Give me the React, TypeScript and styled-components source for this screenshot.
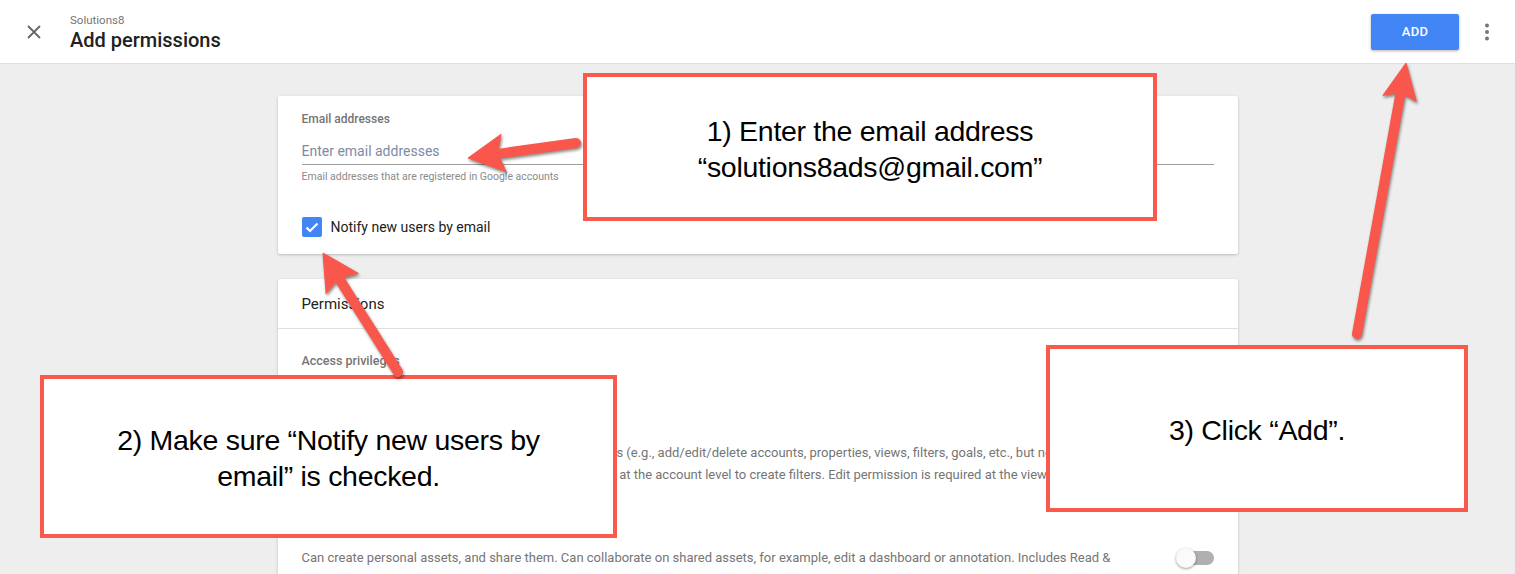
import React from 'react';
import styled, { createGlobalStyle } from 'styled-components';

const GlobalStyle = createGlobalStyle`
  html, body {
    margin: 0;
    padding: 0;
    background: #eeeeee;
    font-family: Roboto, "Noto Sans", Arial, sans-serif;
    overflow: hidden;
  }
  * { box-sizing: border-box; }
`;

const Page = styled.div`
  position: relative;
  width: 1515px;
  height: 574px;
  overflow: hidden;
  background: #eeeeee;
`;

const Header = styled.header`
  height: 64px;
  background: #fff;
  border-bottom: 1px solid #e0e0e0;
  display: flex;
  align-items: center;
  padding: 0 16px 0 22px;
`;

const CloseButton = styled.button`
  width: 24px;
  height: 24px;
  border: none;
  background: none;
  padding: 0;
  display: flex;
  align-items: center;
  justify-content: center;
  color: #616161;
  margin-right: 24px;
`;

const TitleBlock = styled.div`
  display: flex;
  flex-direction: column;
  flex: 1;
  margin-top: 2px;
`;

const Account = styled.div`
  font-size: 11.5px;
  color: #757575;
  line-height: 14px;
`;

const Title = styled.h1`
  margin: 0;
  font-size: 20px;
  font-weight: 500;
  color: #212121;
  line-height: 26px;
`;

const AddButton = styled.button`
  width: 88px;
  height: 36px;
  border: none;
  border-radius: 2px;
  background: #4285f4;
  color: #fff;
  font-family: Roboto, sans-serif;
  font-size: 13px;
  font-weight: 500;
  letter-spacing: 0.3px;
  box-shadow: 0 1px 3px rgba(0, 0, 0, 0.3);
  margin-right: 16px;
`;

const MoreButton = styled.button`
  width: 24px;
  height: 24px;
  border: none;
  background: none;
  padding: 0;
  display: flex;
  align-items: center;
  justify-content: center;
`;

const Main = styled.main`
  display: flex;
  flex-direction: column;
  align-items: center;
  gap: 25px;
  padding-top: 32px;
`;

const Card = styled.section`
  width: 960px;
  background: #fff;
  border-radius: 2px;
  box-shadow: 0 1px 3px rgba(0, 0, 0, 0.22);
`;

const EmailBody = styled.div`
  padding: 16px 24px 17px;
`;

const FieldLabel = styled.div`
  font-size: 12px;
  font-weight: 500;
  color: #757575;
  line-height: 14px;
`;

const InputLine = styled.div`
  margin-top: 16px;
  border-bottom: 1px solid #9e9e9e;
  padding-bottom: 4px;
  font-size: 14px;
  line-height: 18px;
  color: #7d8aa6;
`;

const Helper = styled.div`
  margin-top: 5px;
  font-size: 10.5px;
  color: #8a8a8a;
  line-height: 14px;
`;

const CheckRow = styled.label`
  margin-top: 33px;
  display: flex;
  align-items: center;
  gap: 9px;
  font-size: 14px;
  color: #212121;
`;

const CheckBox = styled.span`
  width: 20px;
  height: 20px;
  border-radius: 2px;
  background: #4285f4;
  display: flex;
  align-items: center;
  justify-content: center;
`;

const CardHeader = styled.div`
  height: 50px;
  display: flex;
  align-items: center;
  padding: 0 24px;
  font-size: 15px;
  color: #212121;
  border-bottom: 1px solid #e0e0e0;
`;

const PermBody = styled.div`
  padding: 24px 24px 24px;
`;

const SectionLabel = styled.div`
  font-size: 12.5px;
  font-weight: 500;
  color: #757575;
  line-height: 16px;
  margin-bottom: 45px;
`;

const Privilege = styled.div`
  margin-bottom: 11px;
`;

const PrivTitle = styled.div`
  font-size: 14px;
  color: #212121;
  line-height: 20px;
  margin-bottom: 8px;
`;

const PrivRow = styled.div`
  display: flex;
  justify-content: space-between;
  align-items: flex-start;
`;

const PrivDesc = styled.p`
  margin: 0;
  width: 830px;
  font-size: 13px;
  line-height: 22px;
  color: #757575;
`;

const Toggle = styled.span`
  position: relative;
  width: 34px;
  height: 14px;
  margin-top: 4px;
  border-radius: 7px;
  background: #b0b0b0;

  &::after {
    content: '';
    position: absolute;
    left: -4px;
    top: -3px;
    width: 20px;
    height: 20px;
    border-radius: 50%;
    background: #fafafa;
    box-shadow: 0 1px 3px rgba(0, 0, 0, 0.4);
  }
`;

/* annotation overlay */

const Callout = styled.div<{ $top: number; $left: number; $w: number; $h: number }>`
  position: absolute;
  top: ${(p) => p.$top}px;
  left: ${(p) => p.$left}px;
  width: ${(p) => p.$w}px;
  height: ${(p) => p.$h}px;
  border: 4px solid #fa5a4c;
  background: #fff;
  display: flex;
  align-items: center;
  justify-content: center;
  text-align: center;
  font-family: "Liberation Sans", Arial, sans-serif;
  font-size: 28.5px;
  letter-spacing: -0.3px;
  line-height: 36px;
  color: #000;
  padding: 3px 44px 0;
  z-index: 2;
`;

const ArrowLayer = styled.svg`
  position: absolute;
  inset: 0;
  width: 1515px;
  height: 574px;
  pointer-events: none;
  z-index: 3;
  filter: drop-shadow(1px 2px 1.5px rgba(0, 0, 0, 0.45));
`;

type ArrowProps = { tail: [number, number]; tip: [number, number]; head: number; half: number };

const Arrow: React.FC<ArrowProps> = ({ tail, tip, head, half }) => {
  const dx = tip[0] - tail[0];
  const dy = tip[1] - tail[1];
  const len = Math.hypot(dx, dy);
  const ux = dx / len;
  const uy = dy / len;
  const bx = tip[0] - ux * head;
  const by = tip[1] - uy * head;
  const nx = -uy;
  const ny = ux;
  const pts = [
    `${tip[0]},${tip[1]}`,
    `${bx + nx * half},${by + ny * half}`,
    `${bx + ux * 6},${by + uy * 6}`,
    `${bx - nx * half},${by - ny * half}`,
  ].join(' ');
  return (
    <g fill="#f9574b" stroke="#f9574b">
      <line x1={tail[0]} y1={tail[1]} x2={bx + ux * 4} y2={by + uy * 4} strokeWidth={10} strokeLinecap="round" />
      <polygon points={pts} strokeWidth={1} strokeLinejoin="round" />
    </g>
  );
};

const App: React.FC = () => (
  <>
    <GlobalStyle />
    <Page>
      <Header>
        <CloseButton aria-label="Close">
          <svg width="14" height="14" viewBox="0 0 14 14">
            <path d="M1 1 L13 13 M13 1 L1 13" stroke="#666" strokeWidth="1.8" />
          </svg>
        </CloseButton>
        <TitleBlock>
          <Account>Solutions8</Account>
          <Title>Add permissions</Title>
        </TitleBlock>
        <AddButton>ADD</AddButton>
        <MoreButton aria-label="More">
          <svg width="6" height="18" viewBox="0 0 6 18">
            <circle cx="3" cy="2.5" r="2" fill="#757575" />
            <circle cx="3" cy="9" r="2" fill="#757575" />
            <circle cx="3" cy="15.5" r="2" fill="#757575" />
          </svg>
        </MoreButton>
      </Header>

      <Main>
        <Card>
          <EmailBody>
            <FieldLabel>Email addresses</FieldLabel>
            <InputLine>Enter email addresses</InputLine>
            <Helper>Email addresses that are registered in Google accounts</Helper>
            <CheckRow>
              <CheckBox>
                <svg width="14" height="11" viewBox="0 0 14 11">
                  <path d="M1.5 5.5 L5 9 L12.5 1.5" stroke="#fff" strokeWidth="2.2" fill="none" />
                </svg>
              </CheckBox>
              Notify new users by email
            </CheckRow>
          </EmailBody>
        </Card>

        <Card>
          <CardHeader>Permissions</CardHeader>
          <PermBody>
            <SectionLabel>Access privileges</SectionLabel>
            <Privilege>
              <PrivTitle>Edit</PrivTitle>
              <PrivRow>
                <PrivDesc>
                  Can perform administrative and report-related functions (e.g., add/edit/delete accounts, properties, views, filters, goals, etc., but not manage users), and see report data. Edit permission is required at the account level to create filters. Edit permission is required at the view level to apply filters.
                </PrivDesc>
                <Toggle />
              </PrivRow>
            </Privilege>
            <Privilege>
              <PrivTitle>Collaborate</PrivTitle>
              <PrivRow>
                <PrivDesc>
                  Can create personal assets, and share them. Can collaborate on shared assets, for example, edit a dashboard or annotation. Includes Read &amp; Analyze.
                </PrivDesc>
                <Toggle />
              </PrivRow>
            </Privilege>
          </PermBody>
        </Card>
      </Main>

      <Callout $top={73} $left={583} $w={574} $h={148}>
        1) Enter the email address “solutions8ads@gmail.com”
      </Callout>
      <Callout $top={375} $left={40} $w={577} $h={163}>
        2) Make sure “Notify new users by email” is checked.
      </Callout>
      <Callout $top={345} $left={1046} $w={422} $h={167}>
        3) Click “Add”.
      </Callout>

      <ArrowLayer viewBox="0 0 1515 574">
        <Arrow tail={[576, 143]} tip={[468, 158]} head={36} half={19} />
        <Arrow tail={[398, 372]} tip={[323, 253]} head={36} half={19} />
        <Arrow tail={[1357, 334]} tip={[1406, 63]} head={36} half={17} />
      </ArrowLayer>
    </Page>
  </>
);

export default App;
